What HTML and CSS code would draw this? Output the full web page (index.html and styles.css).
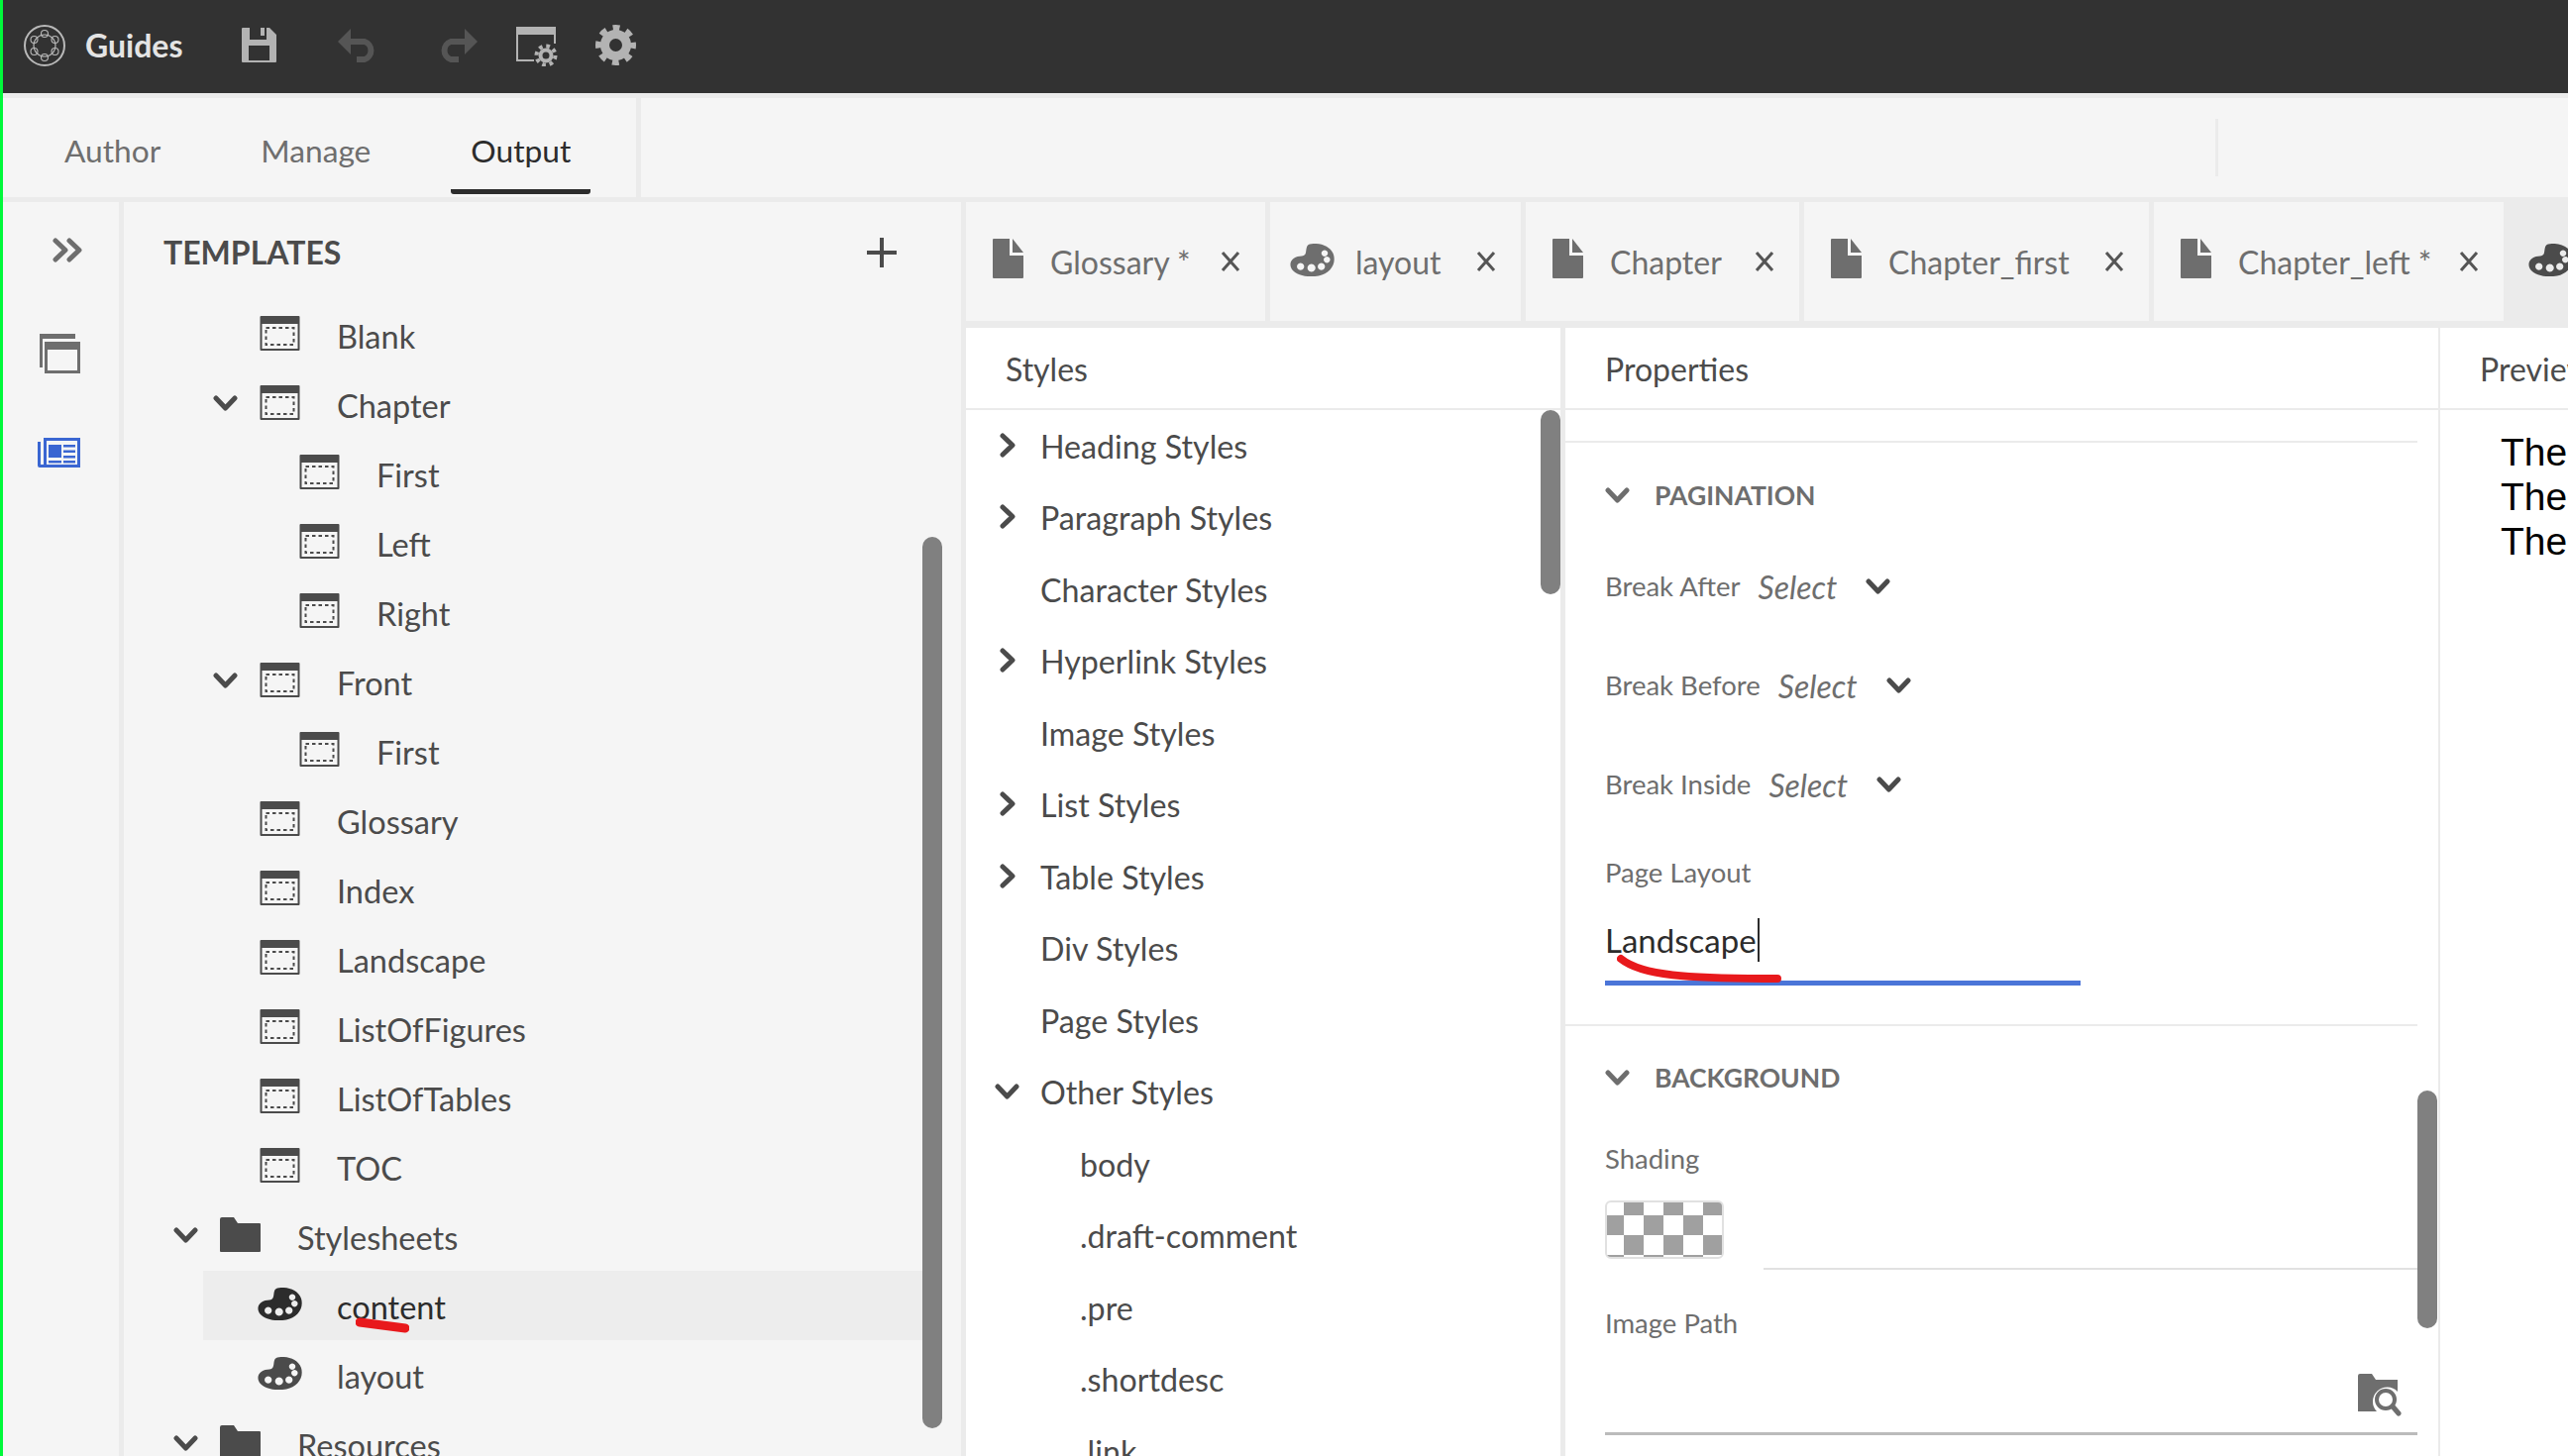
FILE: index.html
```html
<!DOCTYPE html>
<html lang="en">
<head>
    <meta charset="UTF-8">
    <title>Guides - Templates</title>
    <link rel="stylesheet" href="styles.css">
</head>
<body>
    <svg class="defs" width="0" height="0">
        <symbol id="i-template" viewBox="0 0 40 35">
            <path fill="currentColor" d="M0 1a1 1 0 0 1 1-1h38a1 1 0 0 1 1 1v33a1 1 0 0 1-1 1H1a1 1 0 0 1-1-1z"/>
            <rect x="2" y="8" width="36" height="25" fill="#f5f5f5"/>
            <rect x="6" y="12" width="28" height="17" fill="none" stroke="currentColor" stroke-width="2" stroke-dasharray="3.5 3"/>
        </symbol>
        <symbol id="i-palette" viewBox="0 0 45 33">
            <path fill="currentColor" fill-rule="evenodd" d="M20 .5C29-1.500 41 2 44 11c3 10-4 19-15 21.500C18 34.500 4 32 1 24c-2.500-7 4-11.500 11-11.500 7-.5 2-10.500 8-12zM35 6.500a3.200 3.200 0 1 0 .01 0zM37.300 13a3.200 3.200 0 1 0 .01 0zM31.700 19.500a3.600 3.600 0 1 0 .01 0zM21.700 20.500a4 4 0 1 0 .01 0zM10.700 19.500a3.600 3.600 0 1 0 .01 0z"/>
        </symbol>
        <symbol id="i-doc" viewBox="0 0 31 40">
            <path fill="currentColor" d="M0 1a1 1 0 0 1 1-1h16v17h14v22a1 1 0 0 1-1 1H1a1 1 0 0 1-1-1zM20 0l11 14H20z"/>
        </symbol>
        <symbol id="i-folder" viewBox="0 0 41 35">
            <path fill="currentColor" d="M0 2a2 2 0 0 1 2-2h12l4 6h22a1 1 0 0 1 1 1v27a1 1 0 0 1-1 1H1a1 1 0 0 1-1-1z"/>
        </symbol>
        <symbol id="i-down" viewBox="0 0 25 16">
            <path fill="none" stroke="currentColor" stroke-width="5" stroke-linecap="round" stroke-linejoin="round" d="M3 3l9.500 10L22 3"/>
        </symbol>
        <symbol id="i-right" viewBox="0 0 16 25">
            <path fill="none" stroke="currentColor" stroke-width="5" stroke-linecap="round" stroke-linejoin="round" d="M3 3l10 9.500L3 22"/>
        </symbol>
        <symbol id="i-close" viewBox="0 0 20 20">
            <path fill="none" stroke="currentColor" stroke-width="3" d="M2 1l16 18M18 1L2 19"/>
        </symbol>
    </svg>

    <div class="app">
        <header class="topbar">
            <svg class="logo" viewBox="0 0 42 42">
                <circle cx="21" cy="21" r="20" fill="none" stroke="#b9b9b9" stroke-width="2"/>
                <g fill="none" stroke="#b9b9b9" stroke-width="1.100">
                    <circle cx="21" cy="21" r="11"/>
                    <circle cx="21" cy="9" r="3.500"/><circle cx="31.500" cy="15" r="3.500"/><circle cx="31.500" cy="27" r="3.500"/>
                    <circle cx="21" cy="33" r="3.500"/><circle cx="10.500" cy="27" r="3.500"/><circle cx="10.500" cy="15" r="3.500"/>
                </g>
            </svg>
            <span class="brand">Guides</span>
            <svg class="tool tool-save" viewBox="0 0 35 35">
                <path fill="#b3b3b3" fill-rule="evenodd" d="M0 1a1 1 0 0 1 1-1h27l7 7v27a1 1 0 0 1-1 1H1a1 1 0 0 1-1-1zM8 0v12h17V0h-6v8h4V0zM7 18v15h21V18z"/>
            </svg>
            <svg class="tool tool-undo" viewBox="0 0 41 34">
                <path fill="none" stroke="#555" stroke-width="6" d="M10 13h17a9.500 9.500 0 0 1 0 18h-8"/>
                <path fill="#555" d="M0 13L13 0v26z"/>
            </svg>
            <svg class="tool tool-redo" viewBox="0 0 41 34">
                <path fill="none" stroke="#555" stroke-width="6" d="M31 13H14a9.500 9.500 0 0 0 0 18h8"/>
                <path fill="#555" d="M41 13L28 0v26z"/>
            </svg>
            <svg class="tool tool-window" viewBox="0 0 42 40">
                <path fill="#b3b3b3" d="M0 0h40v8H0zM0 8h2v25h16v2H0zM38 8h2v9h-2z"/>
                <circle cx="30" cy="29" r="5.500" fill="none" stroke="#b3b3b3" stroke-width="4"/>
                <circle cx="30" cy="29" r="9.500" fill="none" stroke="#b3b3b3" stroke-width="4" stroke-dasharray="3.700 3.760"/>
            </svg>
            <svg class="tool tool-gear" viewBox="0 0 41 41">
                <circle cx="20.500" cy="20.500" r="11" fill="none" stroke="#b3b3b3" stroke-width="9"/>
                <circle cx="20.500" cy="20.500" r="17.500" fill="none" stroke="#b3b3b3" stroke-width="6" stroke-dasharray="6.870 6.870" stroke-dashoffset="3.400"/>
            </svg>
        </header>

        <nav class="modes">
            <div class="mode-tabs">
                <a class="mode-tab">Author</a>
                <a class="mode-tab">Manage</a>
                <a class="mode-tab active">Output</a>
            </div>
            <div class="modes-divider"></div>
        </nav>

        <main class="workspace">
            <aside class="rail">
                <svg class="rail-icon rail-expand" viewBox="0 0 30 25">
                    <path fill="none" stroke="#6e6e6e" stroke-width="5" stroke-linecap="round" stroke-linejoin="round" d="M3 3l10 9.500L3 22M17 3l10 9.500L17 22"/>
                </svg>
                <svg class="rail-icon rail-windows" viewBox="0 0 41 40">
                    <path fill="#6e6e6e" d="M0 0h36v5H3v29H0z"/>
                    <path fill="#6e6e6e" fill-rule="evenodd" d="M5 8h36v32H5zM8 16v21h30V16z"/>
                </svg>
                <svg class="rail-icon rail-news" viewBox="0 0 43 30">
                    <path fill="#3a66d2" fill-rule="evenodd" d="M6 0h37v30H2a2 2 0 0 1-2-2V4h3v23h3zM9 3v24h31V3z"/>
                    <path fill="#3a66d2" d="M11 7h13v13H11zM26 7h12v2.500H26zM26 12.500h12V15H26zM26 18h12v2.500H26zM11 23h13v2.500H11zM26 23h12v2.500H26z"/>
                </svg>
            </aside>

            <section class="tree-panel">
                <div class="tree-head">
                    <h2 class="tree-title">TEMPLATES</h2>
                    <span class="tree-add"></span>
                </div>
                <div class="tree-row depth-1"><span class="twist"></span><svg class="ico-template"><use href="#i-template"/></svg><span class="tree-label">Blank</span></div>
                <div class="tree-row depth-1"><svg class="twist"><use href="#i-down"/></svg><svg class="ico-template"><use href="#i-template"/></svg><span class="tree-label">Chapter</span></div>
                <div class="tree-row depth-2"><span class="twist"></span><svg class="ico-template"><use href="#i-template"/></svg><span class="tree-label">First</span></div>
                <div class="tree-row depth-2"><span class="twist"></span><svg class="ico-template"><use href="#i-template"/></svg><span class="tree-label">Left</span></div>
                <div class="tree-row depth-2"><span class="twist"></span><svg class="ico-template"><use href="#i-template"/></svg><span class="tree-label">Right</span></div>
                <div class="tree-row depth-1"><svg class="twist"><use href="#i-down"/></svg><svg class="ico-template"><use href="#i-template"/></svg><span class="tree-label">Front</span></div>
                <div class="tree-row depth-2"><span class="twist"></span><svg class="ico-template"><use href="#i-template"/></svg><span class="tree-label">First</span></div>
                <div class="tree-row depth-1"><span class="twist"></span><svg class="ico-template"><use href="#i-template"/></svg><span class="tree-label">Glossary</span></div>
                <div class="tree-row depth-1"><span class="twist"></span><svg class="ico-template"><use href="#i-template"/></svg><span class="tree-label">Index</span></div>
                <div class="tree-row depth-1"><span class="twist"></span><svg class="ico-template"><use href="#i-template"/></svg><span class="tree-label">Landscape</span></div>
                <div class="tree-row depth-1"><span class="twist"></span><svg class="ico-template"><use href="#i-template"/></svg><span class="tree-label">ListOfFigures</span></div>
                <div class="tree-row depth-1"><span class="twist"></span><svg class="ico-template"><use href="#i-template"/></svg><span class="tree-label">ListOfTables</span></div>
                <div class="tree-row depth-1"><span class="twist"></span><svg class="ico-template"><use href="#i-template"/></svg><span class="tree-label">TOC</span></div>
                <div class="tree-row depth-0"><svg class="twist"><use href="#i-down"/></svg><svg class="ico-template"><use href="#i-folder"/></svg><span class="tree-label">Stylesheets</span></div>
                <div class="tree-row depth-1 selected"><span class="twist"></span><svg class="ico-palette"><use href="#i-palette"/></svg><span class="tree-label">content</span>
                    <svg class="scribble scribble-content" viewBox="0 0 54 16"><path d="M4 5l46 6"/></svg>
                </div>
                <div class="tree-row depth-1"><span class="twist"></span><svg class="ico-palette"><use href="#i-palette"/></svg><span class="tree-label">layout</span></div>
                <div class="tree-row depth-0"><svg class="twist"><use href="#i-down"/></svg><svg class="ico-template"><use href="#i-folder"/></svg><span class="tree-label">Resources</span></div>
                <div class="scrollbar tree-scroll"></div>
            </section>

            <section class="editor">
                <div class="file-tabs">
                    <div class="file-tab tab-glossary"><svg class="ico-doc"><use href="#i-doc"/></svg><span class="file-name">Glossary *</span><svg class="ico-close"><use href="#i-close"/></svg></div>
                    <div class="file-tab tab-layout"><svg class="ico-palette"><use href="#i-palette"/></svg><span class="file-name">layout</span><svg class="ico-close"><use href="#i-close"/></svg></div>
                    <div class="file-tab tab-chapter"><svg class="ico-doc"><use href="#i-doc"/></svg><span class="file-name">Chapter</span><svg class="ico-close"><use href="#i-close"/></svg></div>
                    <div class="file-tab tab-first"><svg class="ico-doc"><use href="#i-doc"/></svg><span class="file-name">Chapter_first</span><svg class="ico-close"><use href="#i-close"/></svg></div>
                    <div class="file-tab tab-left"><svg class="ico-doc"><use href="#i-doc"/></svg><span class="file-name">Chapter_left *</span><svg class="ico-close"><use href="#i-close"/></svg></div>
                    <div class="file-tab tab-more"><svg class="ico-palette"><use href="#i-palette"/></svg></div>
                </div>

                <div class="panels">
                    <section class="panel styles-panel">
                        <h3 class="panel-head">Styles</h3>
                        <ul class="style-list">
                            <li class="style-row"><svg class="style-twist"><use href="#i-right"/></svg>Heading Styles</li>
                            <li class="style-row"><svg class="style-twist"><use href="#i-right"/></svg>Paragraph Styles</li>
                            <li class="style-row"><span class="style-twist"></span>Character Styles</li>
                            <li class="style-row"><svg class="style-twist"><use href="#i-right"/></svg>Hyperlink Styles</li>
                            <li class="style-row"><span class="style-twist"></span>Image Styles</li>
                            <li class="style-row"><svg class="style-twist"><use href="#i-right"/></svg>List Styles</li>
                            <li class="style-row"><svg class="style-twist"><use href="#i-right"/></svg>Table Styles</li>
                            <li class="style-row"><span class="style-twist"></span>Div Styles</li>
                            <li class="style-row"><span class="style-twist"></span>Page Styles</li>
                            <li class="style-row"><svg class="style-twist twist-open"><use href="#i-down"/></svg>Other Styles</li>
                            <li class="style-row nested">body</li>
                            <li class="style-row nested">.draft-comment</li>
                            <li class="style-row nested">.pre</li>
                            <li class="style-row nested">.shortdesc</li>
                            <li class="style-row nested">.link</li>
                        </ul>
                        <div class="scrollbar styles-scroll"></div>
                    </section>

                    <section class="panel props-panel">
                        <h3 class="panel-head">Properties</h3>
                        <div class="props-body">
                            <div class="rule rule-top"></div>
                            <div class="section-head"><svg class="section-twist"><use href="#i-down"/></svg>PAGINATION</div>
                            <div class="select-row select-first"><span class="field-label">Break After</span><span class="select-value">Select</span><svg class="select-twist"><use href="#i-down"/></svg></div>
                            <div class="select-row"><span class="field-label">Break Before</span><span class="select-value">Select</span><svg class="select-twist"><use href="#i-down"/></svg></div>
                            <div class="select-row"><span class="field-label">Break Inside</span><span class="select-value">Select</span><svg class="select-twist"><use href="#i-down"/></svg></div>
                            <div class="field-label block layout-label">Page Layout</div>
                            <div class="text-input"><span class="input-value">Landscape</span><span class="caret"></span>
                                <svg class="scribble scribble-input" viewBox="0 0 170 30"><path d="M4 5C25 22 70 25 162 25"/></svg>
                            </div>
                            <div class="rule rule-section"></div>
                            <div class="section-head section-bg"><svg class="section-twist"><use href="#i-down"/></svg>BACKGROUND</div>
                            <div class="field-label block shading-label">Shading</div>
                            <div class="shading-row"><div class="swatch"></div><div class="swatch-line"></div></div>
                            <div class="field-label block path-label">Image Path</div>
                            <div class="path-input">
                                <svg class="ico-find" viewBox="0 0 44 43">
                                    <path fill="#6e6e6e" d="M0 2a2 2 0 0 1 2-2h12l4 6h22v12a14 14 0 0 0-21 20H0z"/>
                                    <circle cx="28" cy="26" r="9" fill="none" stroke="#6e6e6e" stroke-width="4"/>
                                    <path fill="none" stroke="#6e6e6e" stroke-width="5" stroke-linecap="round" d="M35 33l6 7"/>
                                </svg>
                            </div>
                        </div>
                        <div class="scrollbar props-scroll"></div>
                    </section>

                    <section class="panel preview-panel">
                        <h3 class="panel-head">Preview</h3>
                        <div class="preview-body">
                            <p>The</p>
                            <p>The</p>
                            <p>The</p>
                        </div>
                    </section>
                </div>
            </section>
        </main>
    </div>
</body>
</html>
```

FILE: styles.css
```css
* {
    margin: 0;
    padding: 0;
    box-sizing: border-box;
}

body {
    width: 2592px;
    height: 1470px;
    overflow: hidden;
    font-family: Lato, "Open Sans", sans-serif;
    font-size: 32.500px;
    color: #4b4b4b;
    background: #ebebeb;
}

.defs {
    position: absolute;
}

.app {
    display: flex;
    flex-direction: column;
    height: 1470px;
    border-left: 3px solid #00f93a;
    overflow: hidden;
}

/* top bar */
.topbar {
    display: flex;
    align-items: center;
    flex: 0 0 94px;
    padding-bottom: 3px;
    background: #323232;
}

.logo {
    width: 42px;
    height: 42px;
    margin-left: 21px;
}

.brand {
    margin-left: 20px;
    width: 100px;
    font-size: 32px;
    font-weight: 700;
    color: #e4e4e4;
}

.tool {
    flex: none;
}

.tool-save {
    width: 35px;
    height: 35px;
    margin-left: 58px;
}

.tool-undo {
    width: 41px;
    height: 34px;
    margin-left: 62px;
}

.tool-redo {
    width: 41px;
    height: 34px;
    margin-left: 59px;
}

.tool-window {
    width: 42px;
    height: 40px;
    margin-left: 39px;
    margin-top: 2px;
}

.tool-gear {
    width: 41px;
    height: 41px;
    margin-left: 38px;
    margin-top: -1px;
}

/* output / author / manage */
.modes {
    display: flex;
    align-items: center;
    flex: 0 0 100px;
    margin-top: 5px;
    background: #f5f5f5;
}

.mode-tabs {
    display: flex;
    gap: 61px;
    width: 644px;
    height: 100%;
    padding-left: 42px;
    border-right: 5px solid #ebebeb;
}

.mode-tab {
    display: flex;
    align-items: center;
    padding: 6px 20px 0;
    font-size: 31.700px;
    color: #6e6e6e;
}

.mode-tab.active {
    height: 97px;
    padding-top: 14px;
    color: #2c2c2c;
    border-bottom: 5px solid #2c2c2c;
    border-radius: 0 0 3px 3px;
}

.modes-divider {
    width: 3px;
    height: 58px;
    margin-left: 1589px;
    background: #ebebeb;
}

/* body of the page */
.workspace {
    display: flex;
    flex: 1;
    min-height: 0;
    margin-top: 5px;
}

.rail {
    display: flex;
    flex-direction: column;
    flex: 0 0 117px;
    background: #f5f5f5;
}

.rail-icon {
    display: block;
}

.rail-expand {
    width: 30px;
    height: 25px;
    margin: 36px 0 0 50px;
}

.rail-windows {
    width: 41px;
    height: 40px;
    margin: 72px 0 0 37px;
}

.rail-news {
    width: 43px;
    height: 30px;
    margin: 65px 0 0 35px;
}

/* template tree */
.tree-panel {
    position: relative;
    flex: 0 0 850px;
    margin-left: 5px;
    background: #f5f5f5;
    border-right: 5px solid #ebebeb;
    overflow: hidden;
}

.tree-head {
    display: flex;
    align-items: center;
    justify-content: space-between;
    height: 99px;
    padding: 2px 65px 0 40px;
}

.tree-title {
    font-size: 32px;
    font-weight: 700;
    color: #4b4b4b;
}

.tree-add {
    width: 30px;
    height: 30px;
    background:
        linear-gradient(#4b4b4b, #4b4b4b) center / 100% 4px no-repeat,
        linear-gradient(#4b4b4b, #4b4b4b) center / 4px 100% no-repeat;
}

.tree-row {
    position: relative;
    display: flex;
    align-items: center;
    height: 70px;
    width: 806px;
}

.depth-0 {
    padding-left: 50px;
}

.depth-1 {
    padding-left: 90px;
}

.depth-2 {
    padding-left: 130px;
}

.tree-row.selected {
    margin-left: 80px;
    width: 726px;
    padding-left: 10px;
    background: #ededed;
    color: #2c2c2c;
}

.twist {
    flex: none;
    width: 25px;
    height: 16px;
    margin-right: 22px;
    margin-top: -2px;
}

.ico-template {
    flex: none;
    width: 41px;
    height: 35px;
    margin-top: -3px;
    margin-right: 37px;
}

.ico-palette {
    flex: none;
    width: 45px;
    height: 33px;
    margin-top: -3px;
    margin-left: -2px;
    margin-right: 35px;
}

.tree-label {
    padding-top: 3px;
    line-height: 40px;
}

.scribble {
    position: absolute;
    fill: none;
    stroke: #e8191c;
    stroke-width: 9;
    stroke-linecap: round;
}

.scribble-content {
    left: 154px;
    top: 47px;
    width: 54px;
    height: 16px;
}

.scribble-input {
    left: 12px;
    top: 62px;
    width: 170px;
    height: 30px;
    stroke-width: 8;
}

.scrollbar {
    position: absolute;
    width: 20px;
    background: #808080;
    border-radius: 10px;
}

.tree-scroll {
    left: 806px;
    top: 338px;
    height: 900px;
}

/* editor tabs */
.editor {
    display: flex;
    flex-direction: column;
    flex: 1;
    min-width: 0;
}

.file-tabs {
    display: flex;
    gap: 5px;
    flex: 0 0 120px;
}

.file-tab {
    display: flex;
    align-items: center;
    flex: none;
    background: #f5f5f5;
    color: #6e6e6e;
    padding-left: 27px;
    font-size: 32px;
}

.tab-glossary {
    width: 302px;
}

.tab-layout {
    width: 253px;
    padding-left: 20px;
}

.tab-chapter {
    width: 276px;
}

.tab-first {
    width: 348px;
}

.tab-left {
    width: 353px;
}

.tab-more {
    flex: 1;
    background: #ebebeb;
    padding-left: 20px;
}

.ico-doc {
    flex: none;
    width: 31px;
    height: 40px;
    margin-top: -6px;
    margin-right: 27px;
}

.file-tab .ico-palette {
    margin: -4px 21px 0 0;
    color: #6e6e6e;
}

.tab-more .ico-palette {
    color: #4b4b4b;
}

.file-name {
    padding-top: 1px;
    line-height: 40px;
}

.ico-close {
    flex: none;
    width: 20px;
    height: 20px;
    margin-left: auto;
    margin-right: 25px;
    color: #555;
}

/* panels */
.panels {
    display: flex;
    flex: 1;
    min-height: 0;
    margin-top: 7px;
    background: #fff;
}

.panel {
    position: relative;
    overflow: hidden;
}

.panel-head {
    height: 83px;
    padding: 0 40px;
    border-bottom: 2px solid #ebebeb;
    font-size: 32px;
    font-weight: 400;
    line-height: 84px;
    color: #4b4b4b;
}

.styles-panel {
    flex: 0 0 605px;
    border-right: 5px solid #ebebeb;
    font-size: 32.200px;
}

.style-list {
    list-style: none;
}

.style-row {
    display: flex;
    align-items: center;
    height: 72.500px;
    padding-left: 34px;
}

.style-row.nested {
    padding-left: 115px;
}

.style-twist {
    flex: none;
    width: 16px;
    height: 25px;
    margin-right: 25px;
    margin-bottom: 2px;
}

.twist-open {
    width: 25px;
    height: 16px;
    margin-left: -5px;
    margin-right: 21px;
}

.styles-scroll {
    left: 580px;
    top: 83px;
    height: 186px;
}

.props-panel {
    flex: 0 0 883px;
    border-right: 2px solid #ebebeb;
}

.props-body {
    padding: 0 21px 0 40px;
    color: #6e6e6e;
}

.rule {
    height: 2px;
    margin-left: -40px;
    background: #ebebeb;
}

.rule-top {
    margin-top: 31px;
}

.section-head {
    display: flex;
    align-items: center;
    height: 60px;
    margin-top: 23px;
    font-size: 26.500px;
    font-weight: 700;
    color: #6e6e6e;
}

.section-twist {
    width: 25px;
    height: 16px;
    margin-right: 25px;
    color: #6e6e6e;
}

.select-row {
    display: flex;
    align-items: center;
    height: 100px;
}

.select-first {
    margin-top: 12px;
}

.field-label {
    font-size: 27.500px;
    color: #6e6e6e;
    line-height: 40px;
}

.select-value {
    margin-left: 18px;
    font-size: 32px;
    font-style: italic;
    color: #6e6e6e;
}

.select-twist {
    width: 25px;
    height: 16px;
    margin-left: 29px;
    color: #4b4b4b;
}

.block {
    display: block;
}

.layout-label {
    margin-top: 19px;
}

.text-input {
    position: relative;
    display: flex;
    align-items: center;
    width: 480px;
    height: 94px;
    padding: 28px 0 21px;
    border-bottom: 5px solid #4b75d8;
    color: #2c2c2c;
}

.input-value {
    font-size: 33px;
    line-height: 40px;
}

.caret {
    width: 2px;
    height: 44px;
    margin-left: 1px;
    background: #2c2c2c;
}

.rule-section {
    margin-top: 39px;
}

.section-bg {
    margin-top: 22px;
}

.shading-label {
    margin-top: 32px;
}

.shading-row {
    display: flex;
    height: 70px;
    margin-top: 22px;
}

.swatch {
    flex: none;
    width: 120px;
    height: 59px;
    border: 2px solid #e1e1e1;
    border-radius: 6px;
    background: repeating-conic-gradient(#a0a0a0 0 25%, #fff 0 50%) -3px -7px / 40px 40px;
}

.swatch-line {
    flex: 1;
    align-self: flex-end;
    height: 2px;
    margin-left: 40px;
    background: #e1e1e1;
}

.path-label {
    margin-top: 34px;
}

.path-input {
    display: flex;
    justify-content: flex-end;
    height: 93px;
    padding: 31px 16px 0 0;
    border-bottom: 3px solid #bbb;
}

.ico-find {
    width: 44px;
    height: 43px;
}

.props-scroll {
    left: 860px;
    top: 770px;
    height: 240px;
}

.preview-panel {
    flex: 1;
    min-width: 0;
}

.preview-panel .panel-head {
    white-space: nowrap;
}

.preview-body {
    padding: 20px 0 0 61px;
    font-family: "Liberation Sans", Arial, sans-serif;
    font-size: 39px;
    line-height: 45px;
    color: #000;
}
```
